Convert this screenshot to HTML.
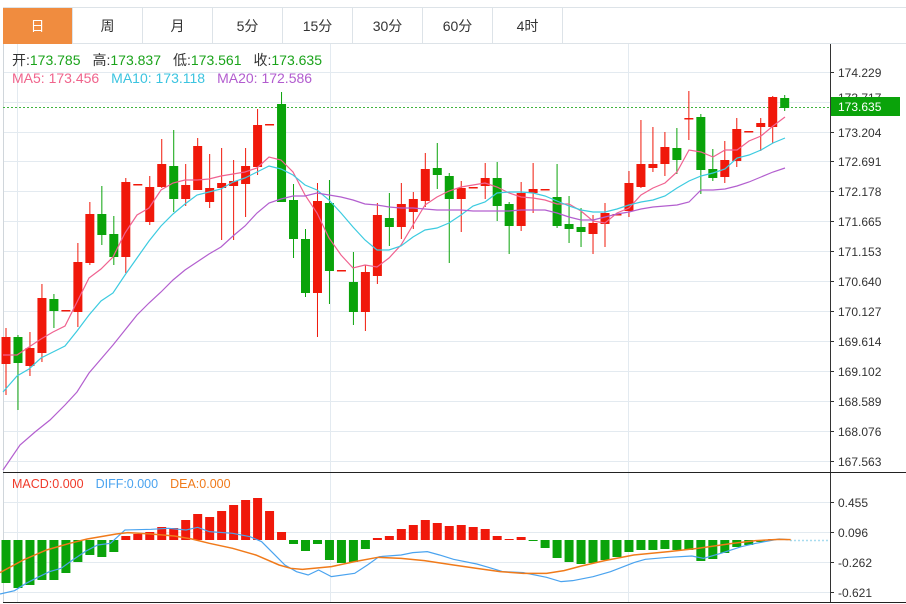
<!DOCTYPE html>
<html><head><meta charset="utf-8"><style>
*{margin:0;padding:0;box-sizing:border-box}
body{width:906px;height:604px;background:#fff;font-family:"Liberation Sans","Noto Sans CJK SC",sans-serif;position:relative;overflow:hidden}
.tabs{position:absolute;left:3px;top:7px;height:37px;width:903px;border-top:1px solid #dde3e8;border-bottom:1px solid #dde3e8}
.tab{position:absolute;top:0;height:36px;width:70px;border-right:1px solid #dde3e8;text-align:center;line-height:36px;font-size:14px;color:#333}
.tab.on{background:#f08c3f;color:#fff}
svg{position:absolute;left:0;top:0}
</style></head><body>
<div class="tabs">
<div class="tab on" style="left:0">日</div><div class="tab" style="left:70px">周</div><div class="tab" style="left:140px">月</div><div class="tab" style="left:210px">5分</div><div class="tab" style="left:280px">15分</div><div class="tab" style="left:350px">30分</div><div class="tab" style="left:420px">60分</div><div class="tab" style="left:490px">4时</div>
</div>
<svg id="s" width="906" height="604" style="top:0"></svg>
<script>
var s='';
function L(x1,y1,x2,y2,c,w,extra){s+='<line x1="'+x1+'" y1="'+y1+'" x2="'+x2+'" y2="'+y2+'" stroke="'+c+'" stroke-width="'+(w||1)+'" '+(extra||'')+'/>';}
var py=[72,102,132,161,191,221,251,281,311,341,371,401,431,461];
var pl=['174.229','173.717','173.204','172.691','172.178','171.665','171.153','170.640','170.127','169.614','169.102','168.589','168.076','167.563'];
for(var i=0;i<py.length;i++){L(3,py[i]+.5,830,py[i]+.5,'#e3eaf0');}
[17.5,330.5,628.5].forEach(function(x){L(x,44,x,602,'#e3eaf0');});
[502,532,562,592].forEach(function(y){L(3,y+.5,830,y+.5,'#e3eaf0');});
L(3.5,44,3.5,602,'#d0d6db');
L(830.5,44,830.5,602,'#333');
L(3,472.5,906,472.5,'#222');
L(3,602.5,906,602.5,'#222');
for(var i=0;i<py.length;i++){L(830,py[i]+.5,834,py[i]+.5,'#333');if(i!=1)s+='<text x="838" y="'+(py[i]+5)+'" font-size="12" fill="#333">'+pl[i]+'</text>';}
[[502,'0.455'],[532,'0.096'],[562,'-0.262'],[592,'-0.621']].forEach(function(a){L(830,a[0]+.5,834,a[0]+.5,'#333');s+='<text x="838" y="'+(a[0]+5)+'" font-size="12" fill="#333">'+a[1]+'</text>';});
s+='<text x="838" y="102" font-size="12" fill="#333">173.717</text>';
L(3,107.5,830,107.5,'#3fb43f',1,'stroke-dasharray="2,2"');
s+='<rect x="831" y="97" width="69" height="19" fill="#0aa30a"/><text x="838" y="111" font-size="12" fill="#fff">173.635</text>';
var R='#f0180a',G='#0aa30a';
var c=[[337,364,328,395,R],[337,363,335,410,G],[348,366,332,376,R],[298,353,284,362,R],[299,311,294,328,G],[310,311,310,311,R],[262,312,243,327,R],[214,263,202,265,R],[214,235,186,245,G],[234,257,216,265,G],[182,257,178,273,R],[184,185,184,185,R],[187,222,176,225,R],[164,187,139,188,R],[166,199,130,212,G],[185,199,164,206,R],[146,190,138,190,R],[188,202,154,208,R],[183,188,148,240,R],[181,186,160,240,R],[166,184,148,217,R],[125,167,109,175,R],[124,125,124,125,R],[104,202,92,202,G],[200,239,184,258,G],[239,293,229,297,G],[201,293,183,337,R],[203,271,180,304,G],[270,271,270,271,R],[282,312,252,325,G],[272,312,265,331,R],[215,276,203,284,R],[218,227,193,246,G],[204,227,183,239,R],[199,212,192,229,R],[169,201,153,207,R],[168,175,143,189,G],[176,199,173,263,G],[188,199,181,232,R],[187,188,187,188,R],[178,186,163,199,R],[178,206,162,221,G],[204,226,202,254,G],[193,226,182,231,R],[189,193,163,213,R],[189,190,189,190,R],[197,226,164,228,G],[224,229,196,243,G],[227,232,208,247,G],[223,234,215,254,R],[213,224,203,247,R],[214,215,214,215,R],[183,211,171,217,R],[164,187,120,188,R],[164,168,127,172,R],[147,164,132,176,R],[148,160,128,174,G],[118,119,91,140,R],[117,170,114,194,G],[169,178,149,181,G],[160,177,141,183,R],[129,161,118,167,R],[131,132,131,132,R],[123,127,118,151,R],[97,127,96,143,R],[98,108,95,111,G]];
function X(i){return 6+i*11.98;}
c.forEach(function(d,i){var x=X(i);L(x,d[2],x,d[3],d[4]);s+='<rect x="'+(x-4.5)+'" y="'+d[0]+'" width="9" height="'+Math.max(1.5,d[1]-d[0])+'" fill="'+d[4]+'"/>';});
function P(pts,col){s+='<polyline fill="none" stroke="'+col+'" stroke-width="1.2" points="'+pts+'"/>';}
P('3,355 17,355 29,347 41,339 53,332 65,326 77,302 89,278 101,269 113,257 125,233 137,215 149,208 161,190 173,183 185,180 197,180 209,179 221,176 233,174 245,172 257,168 269,157 281,160 293,172 305,195 317,213 329,238 341,255 353,268 365,265 377,267 389,258 401,245 413,225 425,205 437,197 449,191 461,187 473,185 485,183 497,187 509,193 521,197 533,198 545,200 557,204 569,204 581,211 593,221 605,223 617,213 629,208 641,195 653,188 665,183 677,172 689,150 701,152 713,157 725,150 737,150 749,141 761,136 773,126 785,117','#f06290');
P('3,392 17,376 29,369 41,358 53,352 65,346 77,331 89,315 101,301 113,293 125,275 137,258 149,241 161,226 173,214 185,204 197,195 209,192 221,189 233,182 245,178 257,172 269,166 281,169 293,175 305,185 317,190 329,200 341,213 353,227 365,240 377,250 389,250 401,246 413,237 425,230 437,228 449,223 461,215 473,206 485,202 497,193 509,192 521,192 533,193 545,196 557,201 569,206 581,210 593,212 605,212 617,209 629,205 641,202 653,200 665,196 677,188 689,181 701,176 713,173 725,169 737,158 749,155 761,150 773,143 785,138','#3ccbe0');
P('3,470 20,445 35,432 50,420 65,405 77,392 89,373 101,359 113,345 125,330 137,315 149,303 161,292 173,280 185,270 197,262 209,254 221,247 233,236 245,226 257,213 269,203 281,199 293,196 305,196 317,193 329,195 341,197 353,200 365,204 377,205 389,207 401,208 413,208 425,209 437,210 449,210 461,210 473,211 485,211 497,211 509,211 521,210 533,210 545,210 557,213 569,217 581,220 593,220 605,217 617,214 629,212 641,209 653,207 665,206 677,205 689,202 701,190 713,190 725,189 737,186 749,182 761,177 773,172 785,168','#b35fcf');
var m=[583,588,585,580,580,573,562,555,557,552,536,534,532,527,528,520,514,517,511,505,500,498,511,532,544,551,544,560,563,562,549,538,536,529,525,520,523,526,525,527,529,536,539,537,541,548,558,562,564,563,560,557,552,550,550,549,550,550,561,559,553,547,545,542,539,539];
m.forEach(function(y,i){var x=X(i),z=540;var col=(y<z)?R:G;if(i>=31&&i<=43)col=R;if(i==44)col=G;if(i==64)col=R;if(i==65)col='#c08080';var t=Math.min(y,z),h=Math.max(1,Math.abs(y-z));s+='<rect x="'+(x-4.5)+'" y="'+t+'" width="9" height="'+h+'" fill="'+col+'"/>';});
L(790,540.5,830,540.5,'#a8dcef',1.5,'stroke-dasharray="2,2"');
s+='<g transform="translate(0,440) scale(0.5814,0.3333)">';
s+='<polyline fill="none" stroke="#4aa3ef" stroke-width="1.2" vector-effect="non-scaling-stroke" points="0,462 25,452 45,430 65,412 85,395 105,385 125,360 148,333 168,315 190,310 215,270 260,268 290,265 320,270 340,262 360,275 400,280 430,290 450,305 470,340 490,375 510,395 530,405 548,390 570,410 610,400 632,375 652,350 690,345 710,338 735,335 756,345 780,358 820,372 840,382 865,395 900,398 940,412 965,425 985,422 1020,410 1050,395 1090,368 1110,358 1150,352 1190,348 1210,355 1240,340 1275,320 1300,310 1340,297 1355,299"/>';
s+='<polyline fill="none" stroke="#f07a1a" stroke-width="1.5" vector-effect="non-scaling-stroke" points="0,398 40,360 80,330 120,310 150,297 200,282 220,278 260,282 300,288 330,297 360,310 400,325 440,345 480,375 500,385 520,388 570,380 610,365 650,352 690,355 730,362 780,375 820,385 860,395 900,400 940,400 970,392 1000,378 1040,362 1090,345 1150,335 1200,325 1260,310 1300,302 1340,298 1360,299"/>';
s+='</g>';
s+='<text y="65" font-size="14"><tspan x="12" fill="#333">开:</tspan><tspan fill="#1aa31a">173.785</tspan><tspan dx="12" fill="#333">高:</tspan><tspan fill="#1aa31a">173.837</tspan><tspan dx="12" fill="#333">低:</tspan><tspan fill="#1aa31a">173.561</tspan><tspan dx="12" fill="#333">收:</tspan><tspan fill="#1aa31a">173.635</tspan></text>';
s+='<text y="83" font-size="14"><tspan x="12" fill="#f0648c">MA5: 173.456</tspan><tspan dx="12" fill="#3bc4e0">MA10: 173.118</tspan><tspan dx="12" fill="#b25ccf">MA20: 172.586</tspan></text>';
s+='<text y="488" font-size="12.5"><tspan x="12" fill="#f03a2a">MACD:0.000</tspan><tspan dx="12" fill="#4aa3ef">DIFF:0.000</tspan><tspan dx="12" fill="#f07a1a">DEA:0.000</tspan></text>';
document.getElementById('s').innerHTML=s;
</script>
</body></html>
